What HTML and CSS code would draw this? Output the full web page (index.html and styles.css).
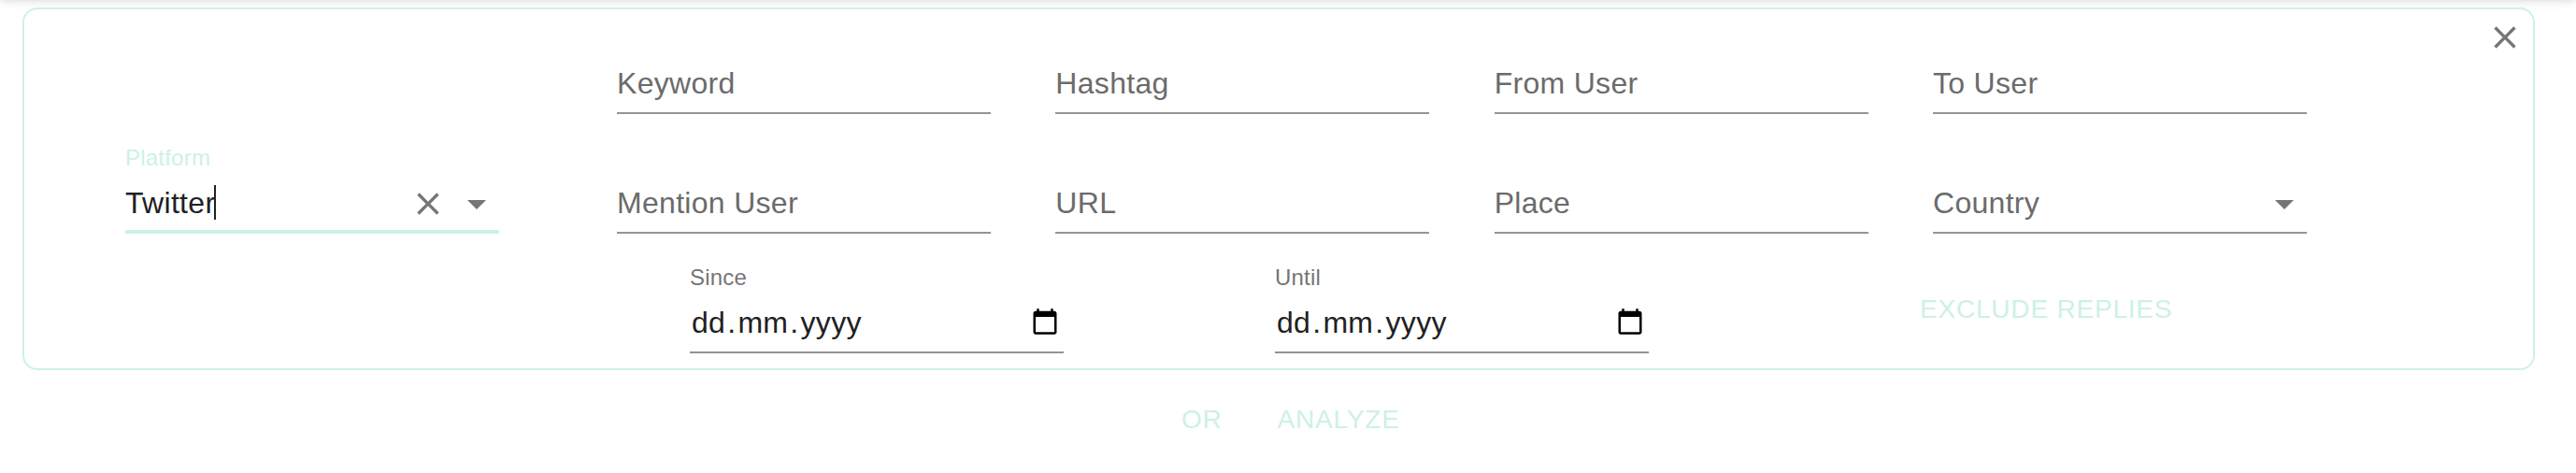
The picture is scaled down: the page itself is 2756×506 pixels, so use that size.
FILE: index.html
```html
<!DOCTYPE html>
<html lang="en">
<head>
<meta charset="utf-8">
<title>Search</title>
<link rel="stylesheet" href="styles.css">
</head>
<body>
<svg class="sprite" aria-hidden="true">
  <symbol id="close" viewBox="0 0 24 24"><path d="M19 6.41L17.59 5 12 10.59 6.41 5 5 6.41 10.59 12 5 17.59 6.41 19 12 13.41 17.59 19 19 17.59 13.41 12z"/></symbol>
  <symbol id="arrow" viewBox="0 0 24 24"><path d="M7 10l5 5 5-5z"/></symbol>
  <symbol id="calendar" viewBox="0 0 24 24"><path d="M20 3h-1V1h-2v2H7V1H5v2H4c-1.1 0-2 .9-2 2v16c0 1.1.9 2 2 2h16c1.1 0 2-.9 2-2V5c0-1.1-.9-2-2-2zm0 18H4V8h16v13z"/></symbol>
</svg>
<header class="appbar"></header>
<main class="page">
  <section class="card">
    <div class="field platform">
      <label class="label label-focus">Platform</label>
      <div class="input input-focus"><span>Twitter</span><b class="caret"></b>
        <svg class="icon icon-clear"><use href="#close"/></svg><svg class="icon icon-arrow"><use href="#arrow"/></svg></div>
    </div>
    <div class="filters">
      <div class="row">
        <div class="input"><span>Keyword</span></div>
        <div class="input"><span>Hashtag</span></div>
        <div class="input"><span>From User</span></div>
        <div class="input"><span>To User</span></div>
      </div>
      <div class="row row-second">
        <div class="input"><span>Mention User</span></div>
        <div class="input"><span>URL</span></div>
        <div class="input"><span>Place</span></div>
        <div class="input"><span>Country</span><svg class="icon icon-arrow"><use href="#arrow"/></svg></div>
      </div>
      <div class="dates">
        <div class="field">
          <label class="label">Since</label>
          <div class="input date"><span>dd</span><span class="separator">.</span><span>mm</span><span class="separator">.</span><span>yyyy</span><svg class="icon icon-calendar"><use href="#calendar"/></svg></div>
        </div>
        <div class="field until">
          <label class="label">Until</label>
          <div class="input date"><span>dd</span><span class="separator">.</span><span>mm</span><span class="separator">.</span><span>yyyy</span><svg class="icon icon-calendar"><use href="#calendar"/></svg></div>
        </div>
        <button class="button exclude">EXCLUDE REPLIES</button>
      </div>
    </div>
    <svg class="icon icon-remove"><use href="#close"/></svg>
  </section>
  <div class="actions">
    <button class="button">OR</button>
    <button class="button">ANALYZE</button>
  </div>
</main>
</body>
</html>
```
FILE: styles.css
```css
* { box-sizing: border-box; }
body {
  margin: 0;
  height: 506px;
  overflow: hidden;
  background: #fff;
  color: #212121;
  font: 32px/38px "Liberation Sans", Arial, sans-serif;
  letter-spacing: 0.3px;
}
.sprite { position: absolute; width: 0; height: 0; }
.appbar {
  height: 128px;
  margin-top: -137px;
  margin-bottom: 17px;
  box-shadow: 0 4px 8px -2px rgba(0,0,0,.2), 0 8px 10px rgba(0,0,0,.14), 0 2px 20px rgba(0,0,0,.12);
}
.page { padding: 0 44px 0 24px; }
.card {
  display: flex;
  align-items: flex-start;
  height: 388px;
  padding-left: 108px;
  border: 2px solid #cdf1e5;
  border-radius: 16px;
}
.field { display: flex; flex-direction: column; flex: none; width: 400px; }
.platform { margin-top: 142px; }
.label {
  height: 42px;
  padding-top: 3px;
  font-size: 24px;
  line-height: 28px;
  letter-spacing: 0.22px;
  color: #757575;
}
.label-focus { color: #cdf1e5; }
.input {
  display: flex;
  align-items: center;
  flex: none;
  width: 400px;
  height: 54px;
  padding-bottom: 8px;
  border-bottom: 2px solid #949494;
  color: #6b6b6b;
}
.input span { margin-bottom: 2px; }
.input-focus { height: 56px; border-bottom: 4px solid #cdf1e5; color: #212121; padding-bottom: 4px; }
.caret { width: 2px; height: 37px; background: #212121; margin: -3px 0 0 -1px; }
.icon { display: block; flex: none; width: 48px; height: 48px; margin: -5px 0 -5px auto; fill: #757575; }
.icon-clear { width: 40px; height: 40px; }
.icon-clear + .icon-arrow { margin-left: 8px; }
.filters { flex: none; width: 1808px; margin: 58px 0 0 126px; }
.row { display: flex; justify-content: space-between; }
.row-second { margin-top: 74px; }
.dates { display: flex; margin: 30px 0 0 78px; }
.until { width: 400px; margin-left: 226px; }
.date { height: 56px; padding: 0 5px 6px 2px; color: #212121; }
.separator { padding: 0 2px; }
.icon-calendar { width: 30px; height: 30px; margin: -7px 0 -3px auto; fill: #000; }
.button {
  border: 0;
  padding: 0;
  background: none;
  color: #cdf1e5;
  font: 28px/49px "Liberation Sans", Arial, sans-serif;
  letter-spacing: 0.8px;
}
.exclude { margin: 26px 0 0 290px; height: 49px; white-space: nowrap; }
.icon-remove { width: 40px; height: 40px; margin: 10px 10px 0 auto; }
.actions { display: flex; gap: 59px; padding: 28px 0 0 1240px; }
```
